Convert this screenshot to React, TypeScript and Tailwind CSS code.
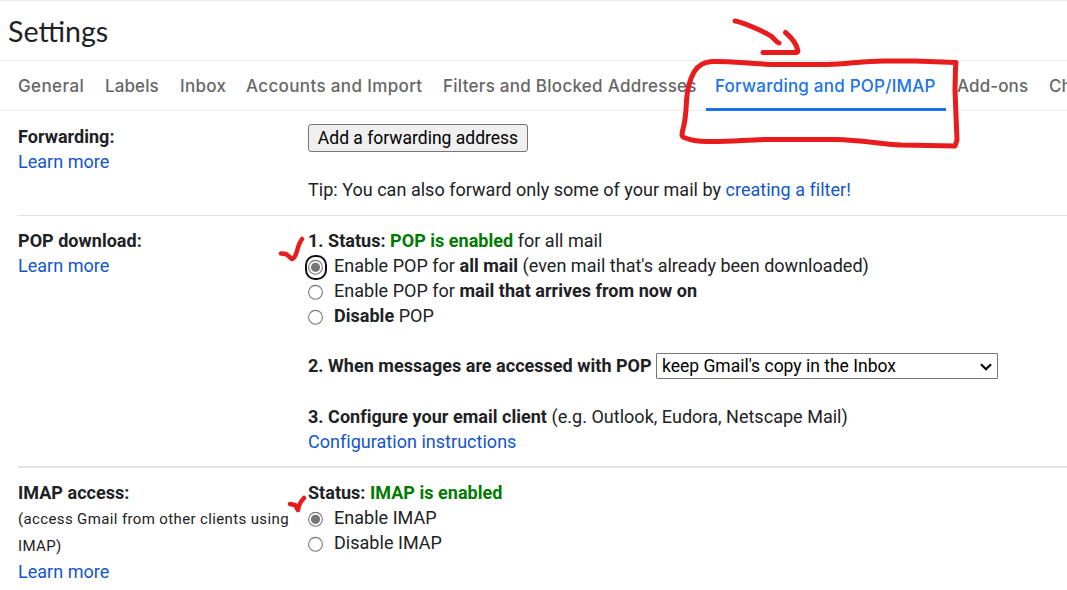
import React from "react";

const tabs = [
  { label: "General", style: "w-[67px] tracking-[0.4px]" },
  { label: "Labels", style: "ml-5 w-[54px] tracking-[0.1px]" },
  { label: "Inbox", style: "ml-[21px] w-[46px] tracking-[0.3px]" },
  { label: "Accounts and Import", style: "ml-5 w-[177px] tracking-[0.36px]" },
  { label: "Filters and Blocked Addresses", style: "ml-5 w-[252px] tracking-[0.27px]" },
];

function Radio({ checked = false, focused = false }: { checked?: boolean; focused?: boolean }) {
  return (
    <svg width="24" height="26" viewBox="0 0 24 26" className="-ml-1 mr-1.5 mt-[3px] shrink-0 overflow-visible">
      {focused && <rect x="2" y="2" width="20" height="23" rx="9" fill="none" stroke="#101010" strokeWidth="2" />}
      <circle cx="11.5" cy="13.3" r="6.9" fill="#fff" stroke="#767676" strokeWidth="1.1" />
      {checked && <circle cx="11.5" cy="13.3" r="4.6" fill="#767676" />}
    </svg>
  );
}

function Option({ children, checked, focused }: { children: React.ReactNode; checked?: boolean; focused?: boolean }) {
  return (
    <label className="flex h-[25px] items-center">
      <Radio checked={checked} focused={focused} />
      <span className="whitespace-pre">{children}</span>
    </label>
  );
}

function Link({ children }: { children: React.ReactNode }) {
  return <a href="#" className="text-[#1155cc]">{children}</a>;
}

export default function App() {
  return (
    <main className="relative h-[590px] w-[1067px] overflow-hidden bg-white font-['Roboto',sans-serif] text-[18px] leading-[25px] tracking-[0.025px] text-[#202124]">
      <header className="flex h-[60px] items-center border-t border-[#e9ecef] pl-2">
        <h1 className="font-['Lato',sans-serif] text-[28.6px] leading-8 tracking-normal">Settings</h1>
      </header>
      <nav className="flex h-[51px] border-y border-[#e9edf0] pl-[18px] font-['Inter',sans-serif] text-[17px] font-medium leading-[50px] tracking-normal whitespace-nowrap text-[#666]">
        {tabs.map((t) => (
          <span key={t.label} className={`shrink-0 ${t.style}`}>{t.label}</span>
        ))}
        <span className="relative z-10 ml-[11px] h-[50px] w-[240px] shrink-0 border-b-[3px] border-[#1a73e8] pl-[9px] tracking-[0.22px] text-[#1a73e8]">
          Forwarding and POP/IMAP
        </span>
        <span className="ml-[11px] w-[72px] shrink-0 tracking-[0.1px]">Add-ons</span>
        <span className="ml-5 shrink-0">Chat</span>
      </nav>

      <section className="ml-[18px] flex h-[105px] border-b border-[#e0e0e0] pt-[13px]">
        <div className="w-[290px] shrink-0">
          <div className="font-bold">Forwarding:</div>
          <Link>Learn more</Link>
        </div>
        <div className="flex flex-col items-start">
          <button className="flex h-[28px] w-[220px] justify-center rounded-[3px] border border-[#767676] bg-[#efefef] pt-px text-[17.5px] tracking-normal text-black whitespace-nowrap">
            Add a forwarding address
          </button>
          <p className="mt-[25px] whitespace-nowrap">
            Tip: You can also forward only some of your mail by <Link>creating a filter!</Link>
          </p>
        </div>
      </section>

      <section className="ml-[18px] flex h-[252px] border-b-2 border-[#e3e3e3] pt-3">
        <div className="w-[290px] shrink-0">
          <div className="font-bold">POP download:</div>
          <Link>Learn more</Link>
        </div>
        <div className="whitespace-nowrap">
          <div>
            <b>1. Status: <span className="text-[#007a00]">POP is enabled</span></b> for all mail
          </div>
          <Option checked focused>Enable POP for <b>all mail</b> (even mail that's already been downloaded)</Option>
          <Option>Enable POP for <b>mail that arrives from now on</b></Option>
          <Option><b>Disable</b> POP</Option>
          <div className="mt-6 flex h-[27px] items-center">
            <b className="w-[348px]">2. When messages are accessed with POP</b>
            <div className="flex h-[26px] w-[342px] items-center justify-between rounded-[1px] border border-[#767676] pl-[5px] pr-[5px] pt-[2px] text-[17.5px] tracking-normal text-black">
              <span>keep Gmail's copy in the Inbox</span>
              <svg width="12" height="8" viewBox="0 0 12 8" fill="none" stroke="#000" strokeWidth="2.2">
                <path d="M1 1.2 6 6.2 11 1.2" />
              </svg>
            </div>
          </div>
          <div className="mt-[25px]"><b>3. Configure your email client</b> (e.g. Outlook, Eudora, Netscape Mail)</div>
          <Link>Configuration instructions</Link>
        </div>
      </section>

      <section className="ml-[18px] flex pt-3">
        <div className="w-[290px] shrink-0">
          <div className="font-bold">IMAP access:</div>
          <div className="whitespace-nowrap pt-px text-[15px] leading-[27px] tracking-[0.37px]">
            (access Gmail from other clients using<br />IMAP)
          </div>
          <div className="-mt-px"><Link>Learn more</Link></div>
        </div>
        <div className="whitespace-nowrap">
          <b>Status: <span className="text-[#007a00]">IMAP is enabled</span></b>
          <Option checked>Enable IMAP</Option>
          <Option>Disable IMAP</Option>
        </div>
      </section>

      <svg className="pointer-events-none absolute inset-0 z-20" width="1067" height="590" viewBox="0 0 1067 590" fill="none" stroke="#e81c1c" strokeLinecap="round" strokeLinejoin="round">
        <g strokeWidth="5">
          <path d="M735 21C742 22 763 31 771 36C775 39 776 42 779 43" />
          <path d="M785.5 32.5C792 38 797 45 798 51Q798 53 794 52.5L763 52.5" />
          <path d="M956 62.5L915 61H884C864 61 847 64 827 64.5H778C750 64 733 61 712 61.5C703 62 697 67 694 72C689 81 687 92 686.5 101C686 112 685.5 121 683 129C682 134 681 136 684 137.5C690 140 698 141.5 707 141.5C728 142 744 140 765 139.5H836C861 140 880 144 901 145L955 146L957 140L955 90L955.5 68Z" />
        </g>
        <path strokeWidth="4.5" d="M281 253.5L286 254L292 259Q295 258 297 251Q299 243 302 239" />
        <path strokeWidth="4.5" d="M290 504L295 505L298 510Q299 503 304 498" />
      </svg>
    </main>
  );
}
